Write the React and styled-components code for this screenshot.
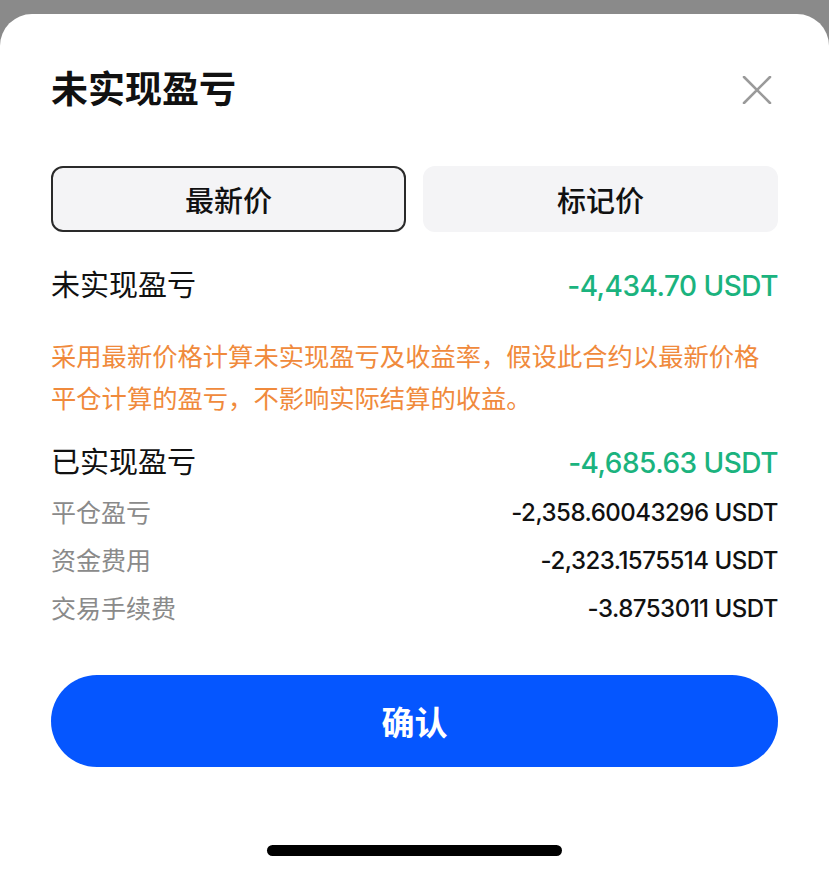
import React, { useState } from 'react';
import styled, { createGlobalStyle } from 'styled-components';

const GlobalStyle = createGlobalStyle`
  html, body {
    margin: 0;
    padding: 0;
    background: #8a8a8a;
  }
  body {
    font-family: Inter, "Noto Sans CJK SC", sans-serif;
    -webkit-font-smoothing: antialiased;
  }
`;

const Sheet = styled.div`
  margin-top: 14px;
  min-height: 859px;
  box-sizing: border-box;
  background: #fff;
  border-radius: 32px 32px 0 0;
  padding: 52px 51px 17px;
  display: flex;
  flex-direction: column;
`;

const Header = styled.div`
  display: flex;
  align-items: center;
  justify-content: space-between;
  height: 48px;
`;

const Title = styled.h1`
  margin: 0;
  font-size: 37px;
  font-weight: 700;
  color: #111;
  line-height: 48px;
`;

const CloseButton = styled.button`
  border: none;
  background: none;
  padding: 0;
  margin-right: 6px;
  width: 30px;
  height: 30px;
  display: flex;
  align-items: center;
  justify-content: center;
  cursor: pointer;
`;

const Tabs = styled.div`
  display: grid;
  grid-template-columns: 1fr 1fr;
  gap: 17px;
  margin-top: 52px;
`;

const Tab = styled.button`
  height: 66px;
  box-sizing: border-box;
  border-radius: 12px;
  background: #f4f4f6;
  border: 2px solid ${(p) => (p.$active ? '#2a2a2a' : '#f4f4f6')};
  font-family: inherit;
  font-size: 29px;
  font-weight: 500;
  color: #111;
  cursor: pointer;
`;

const Row = styled.div`
  display: flex;
  align-items: center;
  justify-content: space-between;
  line-height: ${(p) => (p.$sub ? '48px' : '40px')};
  margin-top: ${(p) => p.$top || 0}px;
`;

const Label = styled.span`
  font-size: ${(p) => (p.$sub ? '25px' : '29px')};
  color: ${(p) => (p.$sub ? '#8a8a8a' : '#111')};
`;

const Value = styled.span`
  font-size: ${(p) => (p.$sub ? '24px' : '28px')};
  font-weight: 500;
  letter-spacing: -0.5px;
  color: ${(p) => (p.$green ? '#1bb37e' : '#111')};
`;

const Note = styled.p`
  margin: 28px 0 0;
  font-family: "Noto Sans CJK SC", sans-serif;
  font-size: 25.3px;
  line-height: 42px;
  color: #f08a3c;
`;

const SubList = styled.div`
  margin-top: 6px;
`;

const ConfirmButton = styled.button`
  margin-top: 42px;
  height: 92px;
  border: none;
  border-radius: 46px;
  background: #0556ff;
  color: #fff;
  font-family: inherit;
  font-size: 33px;
  font-weight: 700;
  cursor: pointer;
`;

const HomeBar = styled.div`
  align-self: center;
  margin-top: 78px;
  width: 295px;
  height: 11px;
  border-radius: 6px;
  background: #000;
`;

const CloseIcon = () => (
  <svg width="30" height="28" viewBox="0 0 30 28">
    <path d="M2 1 L28 27 M28 1 L2 27" stroke="#9a9a9a" strokeWidth="2.6" strokeLinecap="round" />
  </svg>
);

const details = [
  { label: '平仓盈亏', value: '-2,358.60043296 USDT' },
  { label: '资金费用', value: '-2,323.1575514 USDT' },
  { label: '交易手续费', value: '-3.8753011 USDT' },
];

export default function App() {
  const [tab, setTab] = useState('latest');

  return (
    <>
      <GlobalStyle />
      <Sheet>
        <Header>
          <Title>未实现盈亏</Title>
          <CloseButton aria-label="close">
            <CloseIcon />
          </CloseButton>
        </Header>

        <Tabs>
          <Tab $active={tab === 'latest'} onClick={() => setTab('latest')}>最新价</Tab>
          <Tab $active={tab === 'mark'} onClick={() => setTab('mark')}>标记价</Tab>
        </Tabs>

        <Row $top={34}>
          <Label>未实现盈亏</Label>
          <Value $green>-4,434.70 USDT</Value>
        </Row>

        <Note>
          采用最新价格计算未实现盈亏及收益率，假设此合约以最新价格平仓计算的盈亏，不影响实际结算的收益。
        </Note>

        <Row $top={25}>
          <Label>已实现盈亏</Label>
          <Value $green>-4,685.63 USDT</Value>
        </Row>

        <SubList>
          {details.map((d) => (
            <Row $sub key={d.label}>
              <Label $sub>{d.label}</Label>
              <Value $sub>{d.value}</Value>
            </Row>
          ))}
        </SubList>

        <ConfirmButton>确认</ConfirmButton>

        <HomeBar />
      </Sheet>
    </>
  );
}
